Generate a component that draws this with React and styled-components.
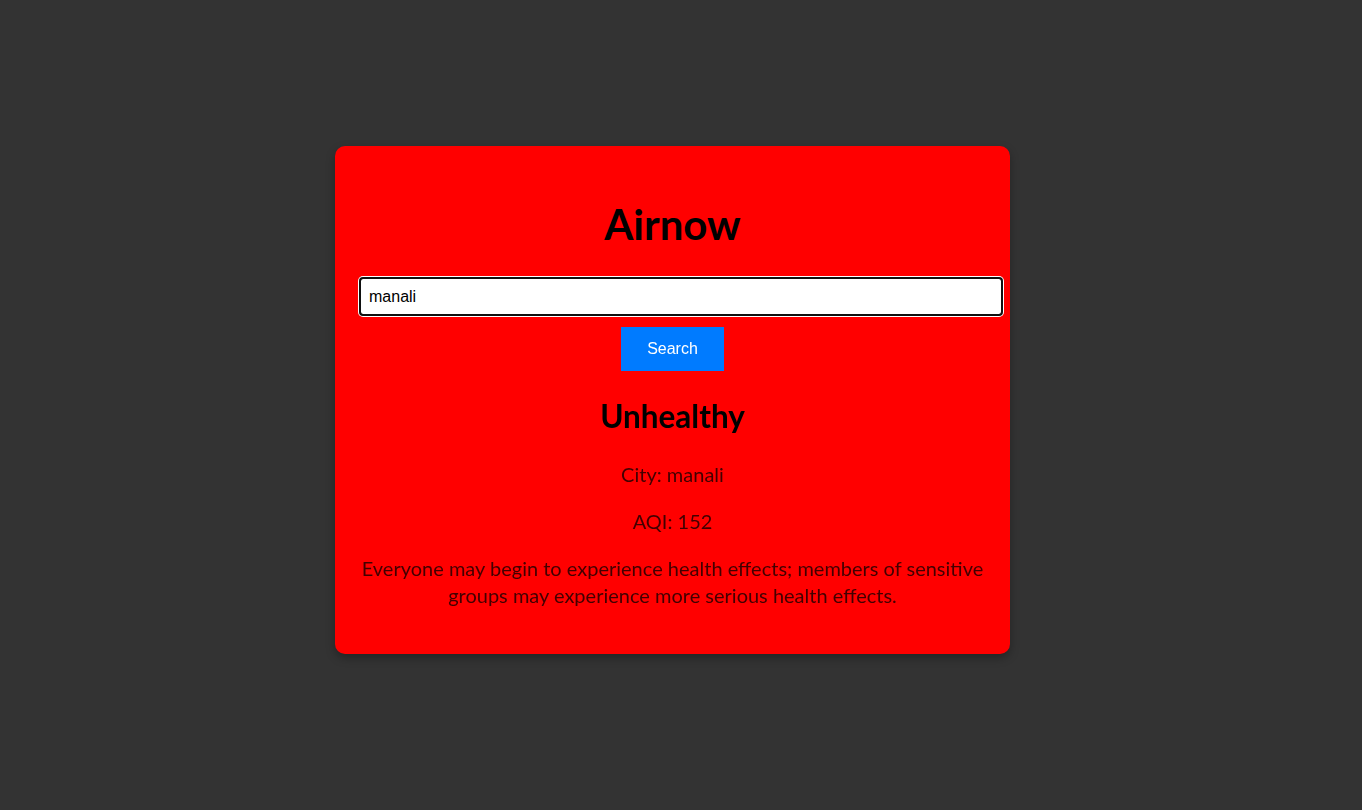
import styled, { createGlobalStyle } from "styled-components"
import { useState } from "react"

const GlobalStyle = createGlobalStyle`
    body {
        margin: 0;
        background-color: #333;
        font-family: "Segoe UI", Lato, "Noto Sans", sans-serif;
    }
`

const Page = styled.div`
    min-height: 100vh;
    box-sizing: border-box;
    display: flex;
    justify-content: center;
    align-items: center;
    padding: 1px 17px 11px 0;
`

const Card = styled.div`
    width: 625px;
    padding: 25px;
    background-color: ${(props) => props.$color};
    border-radius: 10px;
    box-shadow: 0 4px 10px rgba(0, 0, 0, 0.3);
    text-align: center;
`

const Title = styled.h1`
    font-size: 42px;
    line-height: 53px;
    font-weight: 700;
    margin: 27px 0;
    color: #000;
`

const Input = styled.input`
    display: block;
    width: 100%;
    padding: 9px 7px 8px 8px;
    margin: 0 0 12px;
    border: 1px solid #767676;
    border-radius: 3px;
    font-family: "Liberation Sans", Arial, sans-serif;
    font-size: 16px;
    line-height: 18px;
    color: #000;
    background: #fff;
    outline: 2px solid #101010;
    outline-offset: -1px;
    box-shadow: 0 0 0 2px #fff;
`

const Button = styled.button`
    display: block;
    margin: 0 auto;
    padding: 13px 26px;
    border: none;
    background-color: #007bff;
    color: #fff;
    font-family: "Liberation Sans", Arial, sans-serif;
    font-size: 16px;
    line-height: 18px;
    cursor: pointer;
`

const Status = styled.h2`
    font-size: 31.5px;
    line-height: 40px;
    font-weight: 700;
    margin: 25px 0;
    color: #000;
`

const Info = styled.p`
    font-size: 20px;
    line-height: 27px;
    margin: 20px 0;
    color: #420000;
`

function App() {
    const [city, setCity] = useState('manali')

    return (
        <Page>
            <GlobalStyle />
            <Card $color="#ff0000">
                <Title>Airnow</Title>
                <Input type="text" value={city} autoFocus onChange={(event) => {setCity(event.target.value)}} />
                <Button>Search</Button>
                <Status>Unhealthy</Status>
                <Info>City: manali</Info>
                <Info>AQI: 152</Info>
                <Info>Everyone may begin to experience health effects; members of sensitive groups may experience more serious health effects.</Info>
            </Card>
        </Page>
    )
}

export default App
